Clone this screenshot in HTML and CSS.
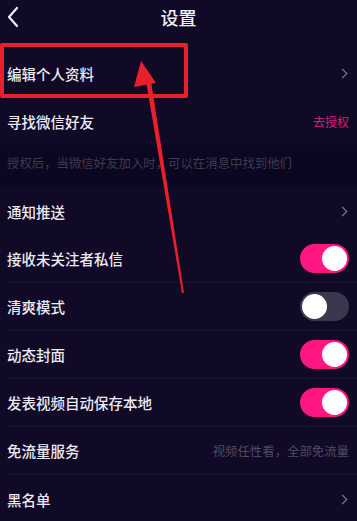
FILE: index.html
```html
<!DOCTYPE html>
<html lang="zh-CN">
<head>
    <meta charset="UTF-8">
    <meta name="viewport" content="width=device-width, initial-scale=1.0">
    <title>设置</title>
    <link rel="stylesheet" href="styles.css">
</head>
<body>
    <div class="screen">
        <!-- 顶部标题栏 -->
        <div class="topbar">
            <svg class="back" width="14" height="22" viewBox="0 0 14 22">
                <path d="M11 2 L3 11 L11 20" fill="none" stroke="#f2f0f6" stroke-width="2.2" stroke-linecap="round" stroke-linejoin="round"/>
            </svg>
            <h1>设置</h1>
        </div>

        <div class="row">
            <span class="label">编辑个人资料</span>
            <span class="chevron"></span>
        </div>
        <div class="row">
            <span class="label">寻找微信好友</span>
            <span class="link">去授权</span>
        </div>
        <div class="hint">授权后，当微信好友加入时，可以在消息中找到他们</div>
        <div class="row">
            <span class="label">通知推送</span>
            <span class="chevron"></span>
        </div>
        <div class="row line">
            <span class="label">接收未关注者私信</span>
            <span class="switch on"></span>
        </div>
        <div class="row line">
            <span class="label">清爽模式</span>
            <span class="switch"></span>
        </div>
        <div class="row line">
            <span class="label">动态封面</span>
            <span class="switch on"></span>
        </div>
        <div class="row line">
            <span class="label">发表视频自动保存本地</span>
            <span class="switch on"></span>
        </div>
        <div class="row line">
            <span class="label">免流量服务</span>
            <span class="note">视频任性看，全部免流量</span>
        </div>
        <div class="row">
            <span class="label">黑名单</span>
            <span class="chevron"></span>
        </div>

        <!-- 标注：红框和箭头 -->
        <div class="mark-box"></div>
        <svg class="mark-arrow" width="357" height="521" viewBox="0 0 357 521">
            <path d="M146.5 84 L151.5 84 L184 293 L182 293 Z" fill="#e8202c"/>
            <path d="M141 61 L156 83 L134 87 Z" fill="#e8202c"/>
        </svg>
    </div>
</body>
</html>
```

FILE: styles.css
```css
body {
    margin: 0;
    background-color: #110a27;
    font-family: "Noto Sans CJK SC", "Noto Sans", sans-serif;
    color: #ebe9f1;
}
.screen {
    position: relative;
    width: 357px;
    height: 521px;
    overflow: hidden;
}
.topbar {
    height: 49px;
    display: flex;
    justify-content: center;
    position: relative;
}
.back {
    position: absolute;
    left: 6px;
    top: 6px;
}
h1 {
    margin: 4px 0 0;
    font-size: 18px;
    font-weight: 500;
    line-height: 26px;
    color: #f2f0f6;
}
.row {
    height: 48px;
    display: flex;
    align-items: center;
    justify-content: space-between;
    padding: 0 8px 0 7px;
    box-sizing: border-box;
}
.row.line {
    border-bottom: 1px solid #1a1430;
    margin-left: 7px;
    padding-left: 0;
}
.label {
    font-size: 14.5px;
    font-weight: 500;
}
.chevron {
    width: 6px;
    height: 6px;
    margin-right: 3px;
    border-top: 1.6px solid #8a8799;
    border-right: 1.6px solid #8a8799;
    transform: rotate(45deg);
}
.link {
    font-size: 12px;
    color: #d41f7c;
}
.note {
    font-size: 12.4px;
    color: #4e4a60;
}
.hint {
    height: 42px;
    box-sizing: border-box;
    padding: 8px 7px 0;
    font-size: 12.4px;
    line-height: 20px;
    color: #3e3a50;
    background-color: #0c0720;
}
.switch {
    width: 49px;
    height: 29px;
    border-radius: 15px;
    background-color: #3b384e;
    position: relative;
}
.switch::after {
    content: "";
    position: absolute;
    top: 2px;
    left: 2px;
    width: 25px;
    height: 25px;
    border-radius: 50%;
    background-color: #fff;
}
.switch.on {
    background-color: #ff1680;
}
.switch.on::after {
    left: 22px;
}
.mark-box {
    position: absolute;
    left: 0;
    top: 43px;
    width: 180px;
    height: 47px;
    border: 4px solid #e8202c;
    border-radius: 2px;
}
.mark-arrow {
    position: absolute;
    left: 0;
    top: 0;
    pointer-events: none;
}
```
